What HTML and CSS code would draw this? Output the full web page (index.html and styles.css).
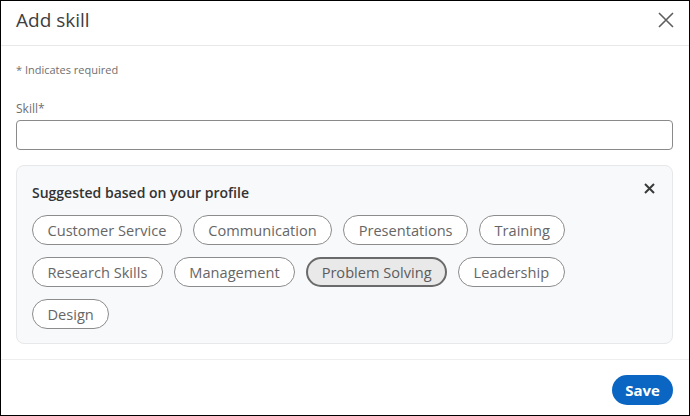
FILE: index.html
```html
<!DOCTYPE html>
<html lang="en">
<head>
<meta charset="utf-8">
<title>Add skill</title>
<link rel="stylesheet" href="styles.css">
</head>
<body>
<div class="modal">
  <header class="modal-header">
    <h2 class="modal-title">Add skill</h2>
    <button class="icon-btn close-btn" aria-label="Dismiss">
      <svg width="16" height="16" viewBox="0 0 16 16"><path d="M1 1 L15 15 M15 1 L1 15" stroke="#5e5e5e" stroke-width="1.6" fill="none"/></svg>
    </button>
  </header>
  <main class="modal-body">
    <p class="required-note">* Indicates required</p>
    <label class="field-label" for="skill">Skill*</label>
    <input class="field-input" id="skill" type="text">
    <section class="suggest-box">
      <div class="suggest-head">
        <h3 class="suggest-title">Suggested based on your profile</h3>
        <button class="icon-btn small-close" aria-label="Hide suggestions">
          <svg width="11" height="11" viewBox="0 0 11 11"><path d="M1 1 L10 10 M10 1 L1 10" stroke="#3a3a3a" stroke-width="2" fill="none"/></svg>
        </button>
      </div>
      <div class="chips">
        <button class="chip">Customer Service</button>
        <button class="chip">Communication</button>
        <button class="chip">Presentations</button>
        <button class="chip">Training</button>
        <button class="chip">Research Skills</button>
        <button class="chip">Management</button>
        <button class="chip chip-active">Problem Solving</button>
        <button class="chip">Leadership</button>
        <button class="chip">Design</button>
      </div>
    </section>
  </main>
  <footer class="modal-footer">
    <button class="save-btn">Save</button>
  </footer>
</div>
</body>
</html>
```

FILE: styles.css
```css
* { box-sizing: border-box; }
html, body { margin: 0; padding: 0; background: #fff; }
body { font-family: "Open Sans", "Noto Sans", "Liberation Sans", sans-serif; }

.modal {
  width: 690px;
  height: 416px;
  border: 1px solid #000;
  display: flex;
  flex-direction: column;
  background: #fff;
}

.modal-header {
  height: 45px;
  border-bottom: 1px solid #e9e9e9;
  display: flex;
  align-items: center;
  justify-content: space-between;
  padding: 0 15px 0 15px;
  flex: none;
}
.modal-title {
  margin: 0;
  font-size: 19px;
  font-weight: 400;
  color: #404040;
  line-height: 24px;
  margin-top: -6px;
}
.icon-btn {
  border: 0;
  background: none;
  padding: 0;
  display: flex;
  align-items: center;
  justify-content: center;
  cursor: pointer;
}
.close-btn { width: 16px; height: 16px; margin-top: -6px; }

.modal-body {
  padding: 16px 16px 0 15px;
  flex: none;
}
.required-note {
  margin: 0;
  font-size: 11px;
  line-height: 16px;
  color: #6f6f6f;
}
.field-label {
  display: block;
  margin-top: 23px;
  font-size: 12px;
  line-height: 16px;
  color: #6f6f6f;
}
.field-input {
  display: block;
  width: 100%;
  height: 30px;
  margin-top: 3px;
  border: 1px solid #8a8a8a;
  border-radius: 4px;
  background: #fff;
  font: inherit;
}

.suggest-box {
  margin-top: 15px;
  background: #f8f9fa;
  border: 1px solid #e7e8ea;
  border-radius: 8px;
  padding: 17px 17px 14px 15px;
}
.suggest-head {
  display: flex;
  align-items: center;
  justify-content: space-between;
}
.suggest-title {
  margin: 0;
  font-size: 14px;
  font-weight: 600;
  line-height: 20px;
  color: #333;
}
.small-close { width: 11px; height: 11px; margin-top: -9px; }

.chips {
  margin-top: 12px;
  display: flex;
  flex-wrap: wrap;
  gap: 12px 11px;
  max-width: 560px;
}
.chip {
  height: 30px;
  padding: 0 14.5px;
  border: 1px solid #8c8c8c;
  border-radius: 15px;
  background: #fff;
  font-family: inherit;
  font-size: 14.6px;
  line-height: 28px;
  color: #666;
  cursor: pointer;
}
.chip-active {
  background: #e9e9e9;
  border: 2px solid #6a6a6a;
  padding: 0 13.5px;
  line-height: 26px;
  color: #5c5c5c;
}

.modal-footer {
  margin-top: 15px;
  border-top: 1px solid #eeeeee;
  flex: 1;
  display: flex;
  justify-content: flex-end;
  align-items: flex-start;
  padding: 15px 16px 0 15px;
}
.save-btn {
  height: 30px;
  width: 61px;
  border: 0;
  border-radius: 15px;
  background: #0a66c2;
  color: #fff;
  font-family: inherit;
  font-size: 15px;
  font-weight: 700;
  cursor: pointer;
  padding: 0;
}
```
